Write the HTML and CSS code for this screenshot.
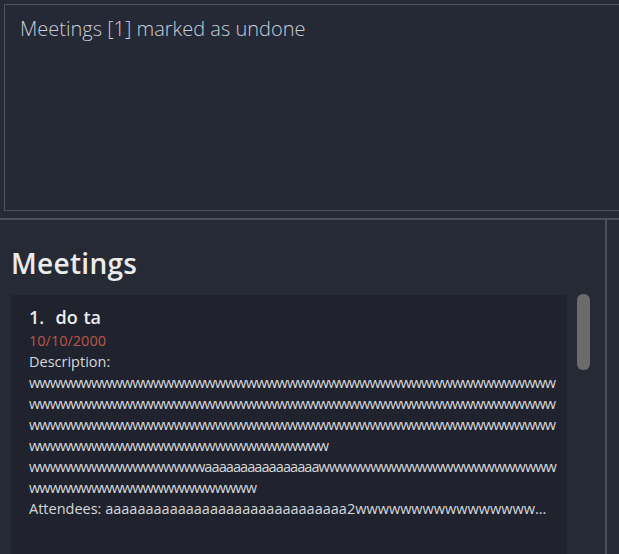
FILE: index.html
```html
<!DOCTYPE html>
<html>
<head>
<meta charset="utf-8">
<link rel="stylesheet" href="styles.css">
</head>
<body>
<div class="app">
  <div class="result-area">
    <div class="result-box">Meetings [1] marked as undone</div>
  </div>
  <div class="hsep"></div>
  <div class="lower">
    <div class="panel">
      <h1 class="title">Meetings</h1>
      <div class="list">
        <div class="card">
          <div class="name">1.&nbsp; do ta</div>
          <div class="date">10/10/2000</div>
          <div class="line">Description:</div>
          <div class="line wl">wwwwwwwwwwwwwwwwwwwwwwwwwwwwwwwwwwwwwwwwwwwwwwwwwww</div>
          <div class="line wl">wwwwwwwwwwwwwwwwwwwwwwwwwwwwwwwwwwwwwwwwwwwwwwwwwww</div>
          <div class="line wl">wwwwwwwwwwwwwwwwwwwwwwwwwwwwwwwwwwwwwwwwwwwwwwwwwww</div>
          <div class="line wl">wwwwwwwwwwwwwwwwwwwwwwwwwwwww</div>
          <div class="line wl">wwwwwwwwwwwwwwwwwaaaaaaaaaaaaaaaawwwwwwwwwwwwwwwwwwwwwww</div>
          <div class="line wl">wwwwwwwwwwwwwwwwwwwwww</div>
          <div class="line ellip">Attendees: aaaaaaaaaaaaaaaaaaaaaaaaaaaaaa2wwwwwwwwwwwwwwwwwwwwwwwwwwwwwwwwwww</div>
        </div>
        <div class="track"><div class="thumb"></div></div>
      </div>
    </div>
    <div class="vsep"></div>
    <div class="side"></div>
  </div>
</div>
</body>
</html>
```
FILE: styles.css
```css
html, body {
  margin: 0;
  padding: 0;
  background: #252a35;
  height: 100%;
  overflow: hidden;
}
.app {
  width: 619px;
  height: 554px;
  display: flex;
  flex-direction: column;
  font-family: "Open Sans", "Noto Sans", sans-serif;
}
.result-area {
  padding: 4px 0 0 4px;
  height: 207px;
  flex: none;
}
.result-box {
  box-sizing: border-box;
  height: 207px;
  width: 640px;
  border: 1px solid #4b5161;
  background: #242935;
  color: #c9cdd6;
  font-weight: 300;
  font-size: 20px;
  padding: 10px 0 0 15px;
  line-height: 28px;
}
.hsep {
  margin-top: 7px;
  height: 2px;
  background: #4a505d;
  flex: none;
}
.lower {
  flex: 1;
  display: flex;
  min-height: 0;
}
.panel {
  width: 605px;
  flex: none;
  padding: 0 0 0 11px;
  box-sizing: border-box;
  display: flex;
  flex-direction: column;
}
.title {
  margin: 0;
  padding-top: 24px;
  height: 51px;
  box-sizing: border-box;
  flex: none;
  font-size: 28px;
  font-weight: 600;
  line-height: 38px;
  color: #ebebeb;
  letter-spacing: 0.3px;
}
.list {
  flex: 1;
  display: flex;
  min-height: 0;
  margin-top: 24px;
}
.card {
  width: 556px;
  flex: none;
  box-sizing: border-box;
  background: #20232e;
  padding: 9px 10px 0 18px;
  color: #d6d8dc;
  font-size: 14.5px;
  line-height: 21px;
  overflow: hidden;
}
.name {
  font-size: 18px;
  font-weight: 600;
  color: #ececec;
  line-height: 26px;
  word-spacing: 1px;
}
.date {
  color: #bd5549;
  line-height: 21px;
}
.line {
  white-space: nowrap;
}
.wl {
  letter-spacing: -0.92px;
}
.ellip {
  overflow: hidden;
  text-overflow: ellipsis;
}
.track {
  width: 13px;
  margin-left: 10px;
  flex: none;
}
.thumb {
  height: 76px;
  margin-top: -1px;
  border-radius: 6px;
  background: #6b6b6b;
}
.vsep {
  width: 2px;
  background: #4a505d;
  flex: none;
}
.side {
  flex: 1;
}
```
